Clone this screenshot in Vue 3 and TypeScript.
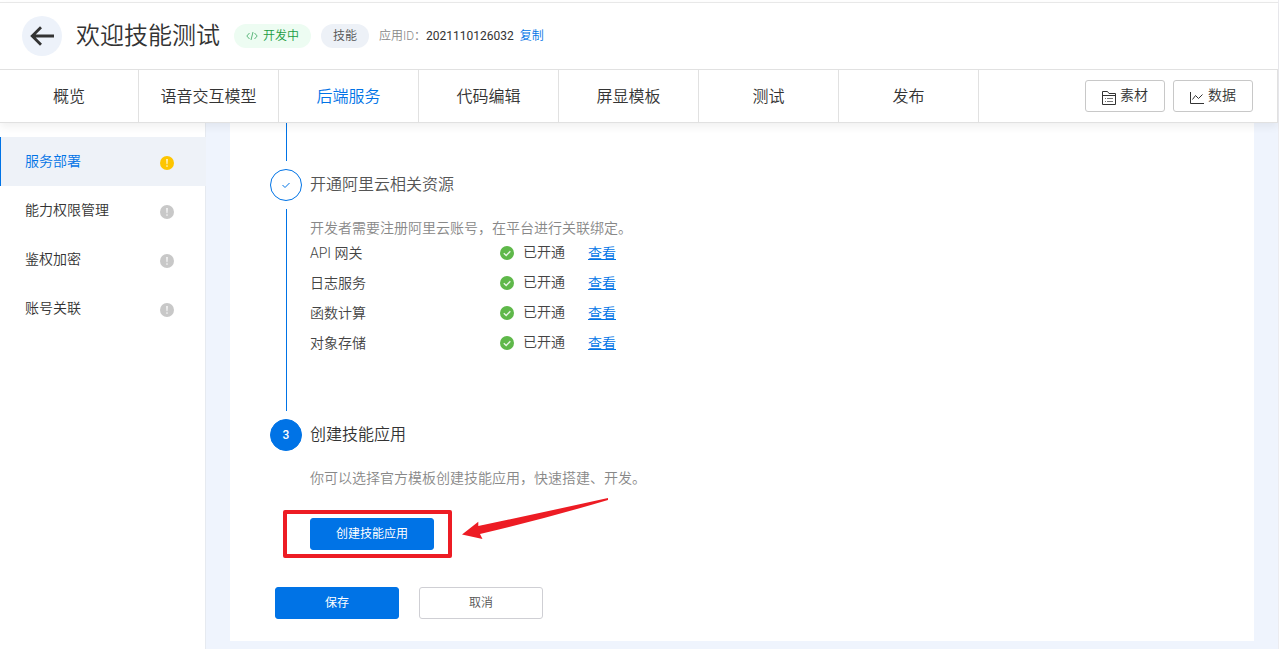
<script setup lang="ts">
import { ref } from 'vue'

interface MenuItem {
  label: string
  warn: boolean
}

const tabs: string[] = ['概览', '语音交互模型', '后端服务', '代码编辑', '屏显模板', '测试', '发布']
const activeTab = ref<string>('后端服务')

const menu: MenuItem[] = [
  { label: '服务部署', warn: true },
  { label: '能力权限管理', warn: false },
  { label: '鉴权加密', warn: false },
  { label: '账号关联', warn: false },
]
const activeMenu = ref<string>('服务部署')

const resources: string[] = ['API 网关', '日志服务', '函数计算', '对象存储']
</script>

<template>
  <div class="app">
    <header class="head">
      <div class="title-bar">
        <button class="back" type="button" aria-label="返回">
          <svg width="24" height="20" viewBox="0 0 24 20" fill="none" stroke="#333" stroke-width="2.8">
            <path d="M24 10H2.5M11 1.2L2.2 10L11 18.8" />
          </svg>
        </button>
        <h1>欢迎技能测试</h1>
        <span class="tag dev">
          <svg width="12" height="10" viewBox="0 0 12 10" fill="none" stroke="#5bb67b" stroke-width="1">
            <path d="M3.5 2L0.8 5L3.5 8M8.5 2L11.2 5L8.5 8M7 1L5 9" />
          </svg>
          开发中
        </span>
        <span class="tag kind">技能</span>
        <span class="app-id">应用ID：<b>2021110126032</b></span>
        <a class="copy" href="#">复制</a>
      </div>
      <nav class="tabs">
        <a
          v-for="t in tabs"
          :key="t"
          href="#"
          :class="{ active: t === activeTab }"
          @click.prevent="activeTab = t"
        >{{ t }}</a>
        <div class="tools">
          <button type="button">
            <svg width="14" height="14" viewBox="0 0 14 14" fill="none" stroke="#333" stroke-width="1">
              <path d="M0.5 13.5V0.5H5.5L7 2.5H13.5V13.5ZM0.5 4.5H13.5" />
              <path d="M3 7.5H4M5 7.5H11M3 10.5H4M5 10.5H11" stroke="#777" />
            </svg>
            <span>素材</span>
          </button>
          <button type="button">
            <svg width="14" height="14" viewBox="0 0 14 14" fill="none" stroke="#333" stroke-width="1">
              <path d="M0.5 1V12.5H14M2.5 8.5L5.5 4.5L8.5 7.5L12.5 3.5" />
            </svg>
            <span>数据</span>
          </button>
        </div>
      </nav>
    </header>

    <div class="body">
      <aside class="side">
        <a
          v-for="m in menu"
          :key="m.label"
          href="#"
          :class="{ active: m.label === activeMenu }"
          @click.prevent="activeMenu = m.label"
        >
          <span>{{ m.label }}</span>
          <svg class="mark" :class="{ warn: m.warn }" width="14" height="14" viewBox="0 0 14 14">
            <circle cx="7" cy="7" r="7" />
            <path d="M6.1 3H7.9L7.5 8.3H6.5Z" fill="#fff" fill-opacity="0.8" />
            <rect x="6.3" y="9.3" width="1.4" height="1.5" fill="#fff" fill-opacity="0.8" />
          </svg>
        </a>
      </aside>

      <main class="main">
        <section class="panel">
          <div class="tail"></div>
          <ol class="steps">
            <li class="step done">
              <div class="rail">
                <span class="dot">
                  <svg width="10" height="8" viewBox="0 0 10 8" fill="none" stroke="#0073e6" stroke-width="1">
                    <path d="M1.5 4L4 6.5L8.5 2" />
                  </svg>
                </span>
                <span class="line"></span>
              </div>
              <div class="content">
                <h2>开通阿里云相关资源</h2>
                <p>开发者需要注册阿里云账号，在平台进行关联绑定。</p>
                <ul class="resources">
                  <li v-for="r in resources" :key="r">
                    <span class="name">{{ r }}</span>
                    <svg width="14" height="14" viewBox="0 0 14 14">
                      <circle cx="7" cy="7" r="7" fill="#5fb84a" />
                      <path d="M3.8 7.2L6.2 9.5L10.3 5.3" fill="none" stroke="#fff" stroke-opacity="0.85" stroke-width="1.4" />
                    </svg>
                    <span class="state">已开通</span>
                    <a href="#">查看</a>
                  </li>
                </ul>
              </div>
            </li>
            <li class="step current">
              <div class="rail"><span class="dot">3</span></div>
              <div class="content">
                <h2>创建技能应用</h2>
                <p>你可以选择官方模板创建技能应用，快速搭建、开发。</p>
                <div class="create">
                  <button class="btn primary" type="button">创建技能应用</button>
                  <span class="frame"></span>
                  <svg class="arrow" width="148" height="44" viewBox="0 0 148 44" fill="#ed1c24">
                    <path d="M0 36.5L16.3 23.7V28Q78 15 146 0V2Q82 21 18 36L20.5 41Z" />
                  </svg>
                </div>
              </div>
            </li>
          </ol>
          <div class="actions">
            <button class="btn primary" type="button">保存</button>
            <button class="btn" type="button">取消</button>
          </div>
        </section>
      </main>
    </div>
  </div>
</template>

<style>
body {
  margin: 0;
  background: #fff;
}
</style>

<style scoped>
.app {
  box-sizing: border-box;
  min-height: 100vh;
  display: flex;
  flex-direction: column;
  padding-top: 2px;
  border-right: 1px solid #ececf0;
  font-family: Roboto, "Noto Sans CJK SC", sans-serif;
  font-size: 14px;
  font-weight: 350;
  color: #333;
}
a {
  color: #0073e6;
  text-decoration: none;
}
button {
  font-family: inherit;
  font-weight: inherit;
  cursor: pointer;
}
svg {
  flex: none;
}
.head {
  position: relative;
  z-index: 2;
  background: #fff;
  border-top: 1px solid #e8e8e8;
  box-shadow: 0 4px 8px rgba(0, 0, 0, 0.06);
}
.title-bar {
  height: 66px;
  display: flex;
  align-items: center;
  padding-left: 22px;
  font-size: 12px;
}
.back {
  width: 40px;
  height: 40px;
  display: flex;
  align-items: center;
  justify-content: center;
  padding: 0;
  border: 0;
  border-radius: 50%;
  background: #edf2fa;
}
h1 {
  margin: 0 14px;
  font-size: 24px;
  line-height: 38px;
  font-weight: 350;
}
.tag {
  height: 24px;
  display: flex;
  align-items: center;
  gap: 5px;
  padding: 0 12px;
  border-radius: 12px;
  line-height: 24px;
}
.dev {
  background: #edfcf2;
  color: #1a9c41;
}
.kind {
  margin: 0 10px;
  background: #edf1f7;
  color: #555;
}
.app-id,
.copy {
  line-height: 24px;
}
.app-id {
  color: #888;
}
.app-id b {
  color: #333;
  font-weight: 400;
}
.copy {
  margin-left: 6px;
}
.tabs {
  height: 52px;
  display: flex;
  border: 1px solid #e1e1e1;
  border-left: 0;
}
.tabs > a {
  box-sizing: border-box;
  width: 140px;
  border-right: 1px solid #e1e1e1;
  text-align: center;
  font-size: 16px;
  line-height: 54px;
  color: #333;
}
.tabs > a:first-child {
  width: 139px;
}
.tabs > a.active {
  color: #0073e6;
}
.tools {
  margin-left: auto;
  display: flex;
  align-items: center;
  gap: 8px;
  padding-right: 24px;
}
.tools button {
  width: 80px;
  height: 32px;
  display: flex;
  align-items: center;
  justify-content: center;
  gap: 4px;
  padding: 0;
  border: 1px solid #c8c8c8;
  border-radius: 3px;
  background: #fff;
  font-size: 14px;
  line-height: 28px;
  color: #333;
}
.tools svg {
  margin-top: 4px;
}
.tools span {
  padding-bottom: 2px;
}
.body {
  flex: 1;
  display: flex;
}
.side {
  position: relative;
  z-index: 1;
  box-sizing: border-box;
  width: 206px;
  padding-top: 14px;
  border-right: 1px solid #e6eaf0;
}
.side a {
  box-sizing: border-box;
  height: 49px;
  display: flex;
  align-items: center;
  justify-content: space-between;
  margin-right: -1px;
  padding: 0 32px 0 24px;
  border-left: 1px solid transparent;
  color: #333;
}
.side span {
  padding-bottom: 4px;
}
.side a.active {
  background: #eef2f8;
  border-left-color: #0073e6;
  color: #0073e6;
}
.mark {
  fill: #c8c8c8;
  margin-top: 3px;
}
.mark.warn {
  fill: #fdc500;
}
.main {
  flex: 1;
  padding: 0 24px 8px;
  background: #eff4fd;
}
.panel {
  padding: 0 40px 22px;
  background: #fff;
}
.tail {
  width: 1px;
  height: 38px;
  margin-left: 16px;
  background: #0073e6;
}
.steps {
  list-style: none;
  margin: 8px 0 0;
  padding: 0;
}
.step {
  display: flex;
  gap: 8px;
}
.step.done {
  min-height: 250px;
}
.rail {
  width: 32px;
  display: flex;
  flex-direction: column;
  gap: 8px;
}
.dot {
  box-sizing: border-box;
  width: 32px;
  height: 32px;
  display: flex;
  align-items: center;
  justify-content: center;
  border: 1px solid #0073e6;
  border-radius: 50%;
  font-size: 12px;
}
.current .dot {
  background: #0073e6;
  color: #fff;
  font-weight: 500;
}
.line {
  flex: 1;
  width: 1px;
  margin: 0 0 8px 16px;
  background: #0073e6;
}
h2 {
  margin: 0 0 17px;
  font-size: 16px;
  line-height: 32px;
  font-weight: 350;
  color: #555;
}
.current h2 {
  color: #333;
}
p {
  margin: 0;
  line-height: 20px;
  color: #888;
}
.resources {
  list-style: none;
  margin: 0;
  padding: 0;
}
.resources li {
  height: 30px;
  display: flex;
  align-items: center;
  color: #444;
}
.resources a,
.name {
  padding-bottom: 2px;
}
.name {
  width: 190px;
}
.state {
  margin: 0 23px 0 9px;
  padding-bottom: 4px;
}
.resources a {
  text-decoration: underline;
}
.create {
  position: relative;
  width: 124px;
  margin-top: 30px;
}
.frame {
  position: absolute;
  inset: -8px -18px -8px -27px;
  border: 4px solid #ed1c24;
  border-radius: 2px;
  pointer-events: none;
}
.arrow {
  position: absolute;
  left: 152px;
  top: -20px;
}
.btn {
  width: 124px;
  height: 32px;
  display: block;
  padding: 0;
  border: 1px solid #cfcfd4;
  border-radius: 3px;
  background: #fff;
  font-size: 12px;
  line-height: 28px;
  color: #555;
}
.btn.primary {
  border-color: #0073e6;
  background: #0073e6;
  color: #fff;
  font-weight: 400;
}
.actions {
  display: flex;
  gap: 20px;
  margin: 37px 0 0 5px;
}
</style>
